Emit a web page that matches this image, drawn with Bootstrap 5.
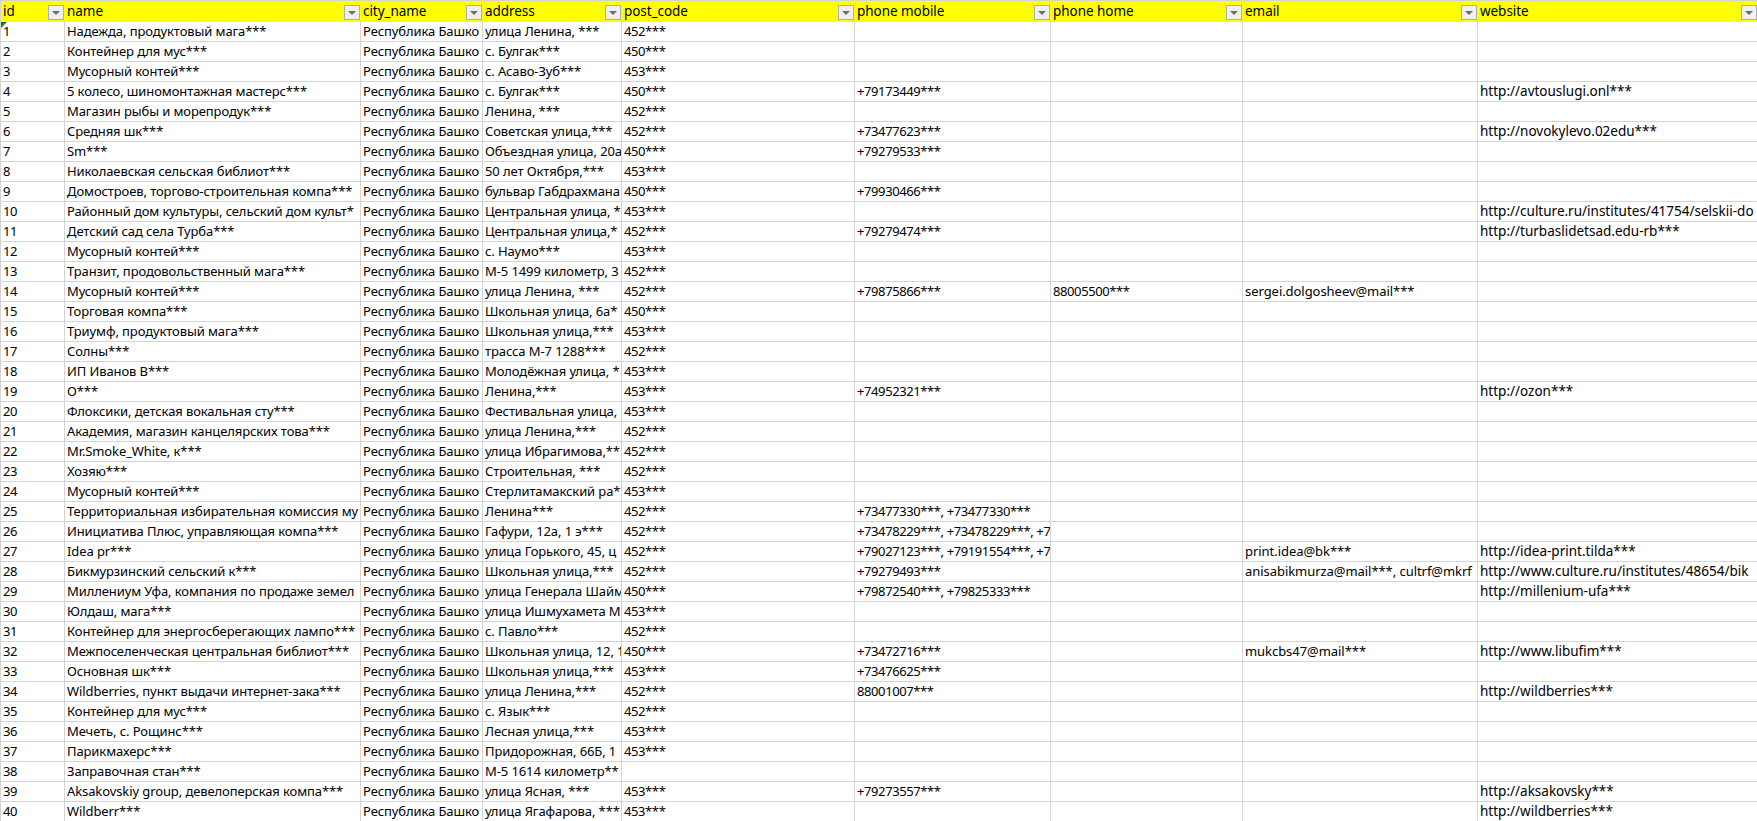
<!DOCTYPE html>
<html lang="ru">
<head>
<meta charset="utf-8">
<title>Sheet</title>
<link href="https://cdn.jsdelivr.net/npm/bootstrap@5.3.0/dist/css/bootstrap.min.css" rel="stylesheet">
<style>
html,body{margin:0;background:#fff;overflow:hidden}
.sheet-table{table-layout:fixed;width:1757px;margin:0;border-collapse:collapse;font-family:"Noto Sans","Liberation Sans",sans-serif;font-size:13px;letter-spacing:-.1px;color:#000}
.sheet-table th,.sheet-table td{height:20px;padding:0 0 0 2px;line-height:19px;border:0;border-right:1px solid #d4d4d4;border-bottom:1px solid #d4d4d4;white-space:nowrap;overflow:hidden;font-weight:400;box-shadow:none;background:#fff;vertical-align:middle}
.sheet-table thead th{background:#ff0;border-bottom:0;border-right:1px solid #ff0;position:relative;height:21px;border-top:1px solid #d4d4d4;font-size:13.5px;letter-spacing:-.05px}
.sheet-table td:first-child,.sheet-table th:first-child{border-left:1px solid #d4d4d4}
.sheet-table td:nth-child(1),.sheet-table td:nth-child(5),.sheet-table td:nth-child(6),.sheet-table td:nth-child(7){letter-spacing:-.4px}
.sheet-table td:nth-child(8){letter-spacing:-.05px}
.sheet-table td:nth-child(9){font-size:13.5px;letter-spacing:0}
.filter-btn{position:absolute;right:0;top:4px;width:16px;height:15px;background:#f0f0f0;border:1px solid #a6aec2;padding:0;display:block}
.filter-btn::after{content:"";position:absolute;left:3px;top:5px;border:4px solid transparent;border-top:4px solid #6d6d6d;border-bottom:0}
.green-mark{position:relative}
.green-mark::before{content:"";position:absolute;left:0;top:0;border-top:6px solid #1e7a1e;border-right:6px solid transparent}
</style>
</head>
<body>
<table class="table sheet-table">
<colgroup><col style="width:64px"><col style="width:296px"><col style="width:122px"><col style="width:139px"><col style="width:233px"><col style="width:196px"><col style="width:192px"><col style="width:235px"><col style="width:280px"></colgroup>
<thead><tr><th>id<span class="filter-btn"></span></th><th>name<span class="filter-btn"></span></th><th>city_name<span class="filter-btn"></span></th><th>address<span class="filter-btn"></span></th><th>post_code<span class="filter-btn"></span></th><th>phone mobile<span class="filter-btn"></span></th><th>phone home<span class="filter-btn"></span></th><th>email<span class="filter-btn"></span></th><th>website<span class="filter-btn"></span></th></tr></thead>
<tbody>
<tr><td class="green-mark">1</td><td>Надежда, продуктовый мага***</td><td>Республика Башко</td><td>улица Ленина, ***</td><td>452***</td><td></td><td></td><td></td><td></td></tr>
<tr><td>2</td><td>Контейнер для мус***</td><td>Республика Башко</td><td>с. Булгак***</td><td>450***</td><td></td><td></td><td></td><td></td></tr>
<tr><td>3</td><td>Мусорный контей***</td><td>Республика Башко</td><td>с. Асаво-Зуб***</td><td>453***</td><td></td><td></td><td></td><td></td></tr>
<tr><td>4</td><td>5 колесо, шиномонтажная мастерс***</td><td>Республика Башко</td><td>с. Булгак***</td><td>450***</td><td>+79173449***</td><td></td><td></td><td>http://avtouslugi.onl***</td></tr>
<tr><td>5</td><td>Магазин рыбы и морепродук***</td><td>Республика Башко</td><td>Ленина, ***</td><td>452***</td><td></td><td></td><td></td><td></td></tr>
<tr><td>6</td><td>Средняя шк***</td><td>Республика Башко</td><td>Советская улица,***</td><td>452***</td><td>+73477623***</td><td></td><td></td><td>http://novokylevo.02edu***</td></tr>
<tr><td>7</td><td>Sm***</td><td>Республика Башко</td><td>Объездная улица, 20а</td><td>450***</td><td>+79279533***</td><td></td><td></td><td></td></tr>
<tr><td>8</td><td>Николаевская сельская библиот***</td><td>Республика Башко</td><td>50 лет Октября,***</td><td>453***</td><td></td><td></td><td></td><td></td></tr>
<tr><td>9</td><td>Домостроев, торгово-строительная компа***</td><td>Республика Башко</td><td>бульвар Габдрахмана</td><td>450***</td><td>+79930466***</td><td></td><td></td><td></td></tr>
<tr><td>10</td><td>Районный дом культуры, сельский дом культ*</td><td>Республика Башко</td><td>Центральная улица, *</td><td>453***</td><td></td><td></td><td></td><td>http://culture.ru/institutes/41754/selskii-do</td></tr>
<tr><td>11</td><td>Детский сад села Турба***</td><td>Республика Башко</td><td>Центральная улица,*</td><td>452***</td><td>+79279474***</td><td></td><td></td><td>http://turbaslidetsad.edu-rb***</td></tr>
<tr><td>12</td><td>Мусорный контей***</td><td>Республика Башко</td><td>с. Наумо***</td><td>453***</td><td></td><td></td><td></td><td></td></tr>
<tr><td>13</td><td>Транзит, продовольственный мага***</td><td>Республика Башко</td><td>М-5 1499 километр, 3</td><td>452***</td><td></td><td></td><td></td><td></td></tr>
<tr><td>14</td><td>Мусорный контей***</td><td>Республика Башко</td><td>улица Ленина, ***</td><td>452***</td><td>+79875866***</td><td>88005500***</td><td>sergei.dolgosheev@mail***</td><td></td></tr>
<tr><td>15</td><td>Торговая компа***</td><td>Республика Башко</td><td>Школьная улица, 6а*</td><td>450***</td><td></td><td></td><td></td><td></td></tr>
<tr><td>16</td><td>Триумф, продуктовый мага***</td><td>Республика Башко</td><td>Школьная улица,***</td><td>453***</td><td></td><td></td><td></td><td></td></tr>
<tr><td>17</td><td>Солны***</td><td>Республика Башко</td><td>трасса М-7 1288***</td><td>452***</td><td></td><td></td><td></td><td></td></tr>
<tr><td>18</td><td>ИП Иванов В***</td><td>Республика Башко</td><td>Молодёжная улица, *</td><td>453***</td><td></td><td></td><td></td><td></td></tr>
<tr><td>19</td><td>О***</td><td>Республика Башко</td><td>Ленина,***</td><td>453***</td><td>+74952321***</td><td></td><td></td><td>http://ozon***</td></tr>
<tr><td>20</td><td>Флоксики, детская вокальная сту***</td><td>Республика Башко</td><td>Фестивальная улица,</td><td>453***</td><td></td><td></td><td></td><td></td></tr>
<tr><td>21</td><td>Академия, магазин канцелярских това***</td><td>Республика Башко</td><td>улица Ленина,***</td><td>452***</td><td></td><td></td><td></td><td></td></tr>
<tr><td>22</td><td>Mr.Smoke_White, к***</td><td>Республика Башко</td><td>улица Ибрагимова,**</td><td>452***</td><td></td><td></td><td></td><td></td></tr>
<tr><td>23</td><td>Хозяю***</td><td>Республика Башко</td><td>Строительная, ***</td><td>452***</td><td></td><td></td><td></td><td></td></tr>
<tr><td>24</td><td>Мусорный контей***</td><td>Республика Башко</td><td>Стерлитамакский ра*</td><td>453***</td><td></td><td></td><td></td><td></td></tr>
<tr><td>25</td><td>Территориальная избирательная комиссия му</td><td>Республика Башко</td><td>Ленина***</td><td>452***</td><td>+73477330***, +73477330***</td><td></td><td></td><td></td></tr>
<tr><td>26</td><td>Инициатива Плюс, управляющая компа***</td><td>Республика Башко</td><td>Гафури, 12а, 1 э***</td><td>452***</td><td>+73478229***, +73478229***, +7</td><td></td><td></td><td></td></tr>
<tr><td>27</td><td>Idea pr***</td><td>Республика Башко</td><td>улица Горького, 45, ц</td><td>452***</td><td>+79027123***, +79191554***, +7</td><td></td><td>print.idea@bk***</td><td>http://idea-print.tilda***</td></tr>
<tr><td>28</td><td>Бикмурзинский сельский к***</td><td>Республика Башко</td><td>Школьная улица,***</td><td>452***</td><td>+79279493***</td><td></td><td>anisabikmurza@mail***, cultrf@mkrf</td><td>http://www.culture.ru/institutes/48654/bik</td></tr>
<tr><td>29</td><td>Миллениум Уфа, компания по продаже земел</td><td>Республика Башко</td><td>улица Генерала Шайм</td><td>450***</td><td>+79872540***, +79825333***</td><td></td><td></td><td>http://millenium-ufa***</td></tr>
<tr><td>30</td><td>Юлдаш, мага***</td><td>Республика Башко</td><td>улица Ишмухамета М</td><td>453***</td><td></td><td></td><td></td><td></td></tr>
<tr><td>31</td><td>Контейнер для энергосберегающих лампо***</td><td>Республика Башко</td><td>с. Павло***</td><td>452***</td><td></td><td></td><td></td><td></td></tr>
<tr><td>32</td><td>Межпоселенческая центральная библиот***</td><td>Республика Башко</td><td>Школьная улица, 12, 1</td><td>450***</td><td>+73472716***</td><td></td><td>mukcbs47@mail***</td><td>http://www.libufim***</td></tr>
<tr><td>33</td><td>Основная шк***</td><td>Республика Башко</td><td>Школьная улица,***</td><td>453***</td><td>+73476625***</td><td></td><td></td><td></td></tr>
<tr><td>34</td><td>Wildberries, пункт выдачи интернет-зака***</td><td>Республика Башко</td><td>улица Ленина,***</td><td>452***</td><td>88001007***</td><td></td><td></td><td>http://wildberries***</td></tr>
<tr><td>35</td><td>Контейнер для мус***</td><td>Республика Башко</td><td>с. Язык***</td><td>452***</td><td></td><td></td><td></td><td></td></tr>
<tr><td>36</td><td>Мечеть, с. Рощинс***</td><td>Республика Башко</td><td>Лесная улица,***</td><td>453***</td><td></td><td></td><td></td><td></td></tr>
<tr><td>37</td><td>Парикмахерс***</td><td>Республика Башко</td><td>Придорожная, 66Б, 1</td><td>453***</td><td></td><td></td><td></td><td></td></tr>
<tr><td>38</td><td>Заправочная стан***</td><td>Республика Башко</td><td>М-5 1614 километр**</td><td></td><td></td><td></td><td></td><td></td></tr>
<tr><td>39</td><td>Aksakovskiy group, девелоперская компа***</td><td>Республика Башко</td><td>улица Ясная, ***</td><td>453***</td><td>+79273557***</td><td></td><td></td><td>http://aksakovsky***</td></tr>
<tr><td>40</td><td>Wildberr***</td><td>Республика Башко</td><td>улица Ягафарова, ***</td><td>453***</td><td></td><td></td><td></td><td>http://wildberries***</td></tr>
</tbody>
</table>
<script src="https://cdn.jsdelivr.net/npm/bootstrap@5.3.0/dist/js/bootstrap.bundle.min.js"></script>
</body>
</html>
